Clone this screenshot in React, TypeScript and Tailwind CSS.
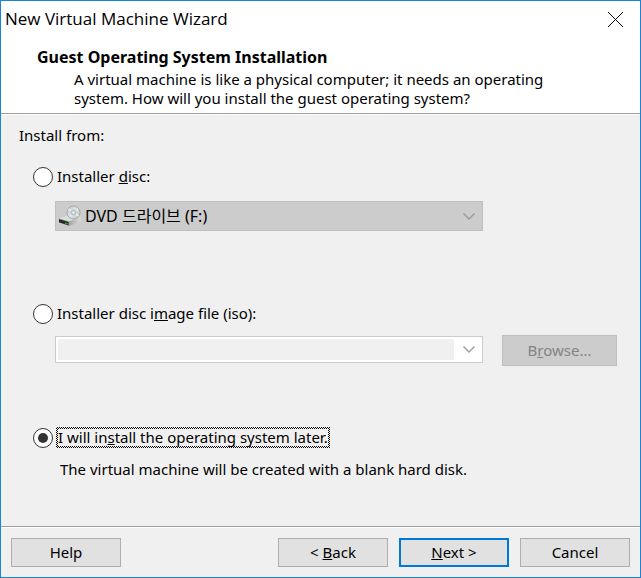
import React, { useState } from "react";

type Source = "disc" | "image" | "later";

type SourceRadioProps = {
  value: Source;
  source: Source;
  onChange: (value: Source) => void;
  children: React.ReactNode;
};

function SourceRadio({ value, source, onChange, children }: SourceRadioProps) {
  return (
    <label className="flex w-fit items-center gap-[3px] leading-[17px]">
      <input
        type="radio"
        name="source"
        className="m-0 grid size-5 shrink-0 appearance-none place-content-center rounded-full border border-[#333] bg-white before:size-[10px] before:rounded-full checked:before:bg-[#333]"
        checked={source === value}
        onChange={() => onChange(value)}
      />
      {source === value ? (
        <span className="bg-[repeating-conic-gradient(#000_0_25%,#f0f0f0_0_50%)] bg-[length:2px_2px] p-[2px]">
          <span className="block bg-[#f0f0f0]">{children}</span>
        </span>
      ) : (
        <span className="p-[2px] pl-px">{children}</span>
      )}
    </label>
  );
}

function Chevron() {
  return (
    <svg width="12" height="7" viewBox="0 0 12 7" fill="none" stroke="#999" strokeWidth="1.3">
      <path d="M0.5 0.5 L6 6 L11.5 0.5" />
    </svg>
  );
}

function DriveIcon() {
  return (
    <svg width="24" height="22" viewBox="0 0 24 22">
      <defs>
        <linearGradient id="disc" x1="0" y1="0" x2="1" y2="1">
          <stop offset="0" stopColor="#bcc3c5" />
          <stop offset="0.5" stopColor="#e2e7e8" />
          <stop offset="1" stopColor="#b4babc" />
        </linearGradient>
        <linearGradient id="drive" x1="0" y1="0" x2="1" y2="0">
          <stop offset="0" stopColor="#a2a2a2" />
          <stop offset="1" stopColor="#dcdcdc" />
        </linearGradient>
      </defs>
      <path d="M1 13.5 L11 10 L22.5 12 L12 16.5 Z" fill="#dedede" />
      <path d="M11 16.5 L22.5 12 V16.5 L11 21 Z" fill="url(#drive)" />
      <path d="M1 13.5 L11 16.5 V21 L1 17.5 Z" fill="#8f8f8f" />
      <path d="M1 14.2 L10.5 17 V20.2 L1 17.2 Z" fill="#252725" />
      <path d="M7 17.9 L9.5 18.7" stroke="#2fa52f" strokeWidth="1.6" />
      <circle cx="15.5" cy="7.5" r="6.5" fill="url(#disc)" stroke="#a3aaac" />
      <path d="M15.5 7.5 L10.5 4 M15.5 7.5 L20.5 11" stroke="#f0f3f4" strokeWidth="1.5" />
      <circle cx="15.5" cy="7.5" r="2.5" fill="#cfd5d7" stroke="#b2b9bb" />
      <circle cx="15.5" cy="7.5" r="1" fill="#eef0f0" />
    </svg>
  );
}

export default function App(): React.ReactElement {
  const [source, setSource] = useState<Source>("later");

  return (
    <main className="flex min-h-screen flex-col border border-[#1883d7] bg-[#f0f0f0] font-['Noto_Sans','Noto_Sans_CJK_KR',sans-serif] text-[15px] text-black">
      <header className="border-b border-[#a0a0a0] bg-white pb-[5px]">
        <div className="flex items-center justify-between pr-[17px] pl-1">
          <h1 className="font-['Open_Sans',sans-serif] text-[17px] leading-9">
            New Virtual Machine Wizard
          </h1>
          <button aria-label="Close">
            <svg width="15" height="15" viewBox="0 0 15 15" stroke="#000">
              <path d="M0 0 L15 15 M15 0 L0 15" />
            </svg>
          </button>
        </div>
        <div className="pt-2 pl-9">
          <h2 className="text-base leading-6 font-bold">
            Guest Operating System Installation
          </h2>
          <p className="max-w-[520px] pt-px pl-[37px] leading-[19px]">
            A virtual machine is like a physical computer; it needs an operating
            <br />
            system. How will you install the guest operating system?
          </p>
        </div>
      </header>

      <form className="grow border-t border-white pr-[23px] pl-8">
        <p className="-ml-[14px] pt-2.5 leading-5">Install from:</p>

        <div className="pt-[21px]">
          <SourceRadio value="disc" source={source} onChange={setSource}>
            Installer <u>d</u>isc:
          </SourceRadio>
          <div className="grid grid-cols-[1fr_115px] gap-[19px] pt-3.5 pl-[22px]">
            <div className="relative">
              <select
                aria-label="Installer disc"
                className="block h-[30px] w-full appearance-none border border-[#bfbfbf] bg-[#ccc] pl-[29px] text-base text-black opacity-100"
                disabled
              >
                <option>DVD 드라이브 (F:)</option>
              </select>
              <span className="pointer-events-none absolute inset-y-0 left-[3px] flex items-center">
                <DriveIcon />
              </span>
              <span className="pointer-events-none absolute inset-y-0 right-2 flex items-center">
                <Chevron />
              </span>
            </div>
          </div>
        </div>

        <div className="pt-[72px]">
          <SourceRadio value="image" source={source} onChange={setSource}>
            Installer disc i<u>m</u>age file (iso):
          </SourceRadio>
          <div className="grid grid-cols-[1fr_115px] items-center gap-[19px] pt-[11px] pl-[22px]">
            <div className="flex h-[27px] self-start border border-[#ccc] bg-white p-0.5 mt-px">
              <input
                aria-label="Installer disc image file"
                className="min-w-0 grow bg-[#f0f0f0] px-1"
                disabled
              />
              <button
                type="button"
                aria-label="Show recent image files"
                className="flex w-[26px] items-center justify-center pl-1"
                disabled
              >
                <Chevron />
              </button>
            </div>
            <button
              type="button"
              className="h-[31px] border border-[#bfbfbf] bg-[#ccc] text-[#838383]"
              disabled
            >
              B<u>r</u>owse...
            </button>
          </div>
        </div>

        <div className="pt-[61px] pb-8">
          <SourceRadio value="later" source={source} onChange={setSource}>
            I will in<u>s</u>tall the operating system later.
          </SourceRadio>
          <p className="pt-[11px] pl-[27px] leading-5">
            The virtual machine will be created with a blank hard disk.
          </p>
        </div>
      </form>

      <footer className="border-t border-[#a0a0a0]">
        <div className="flex gap-[11px] border-t border-white p-2.5">
          <button className="mr-auto h-[29px] w-[110px] border border-[#adadad] bg-[#e1e1e1]">
            Help
          </button>
          <button className="h-[29px] w-[110px] border border-[#adadad] bg-[#e1e1e1]">
            &lt; <u>B</u>ack
          </button>
          <button className="h-[29px] w-[110px] border-2 border-[#0078d7] bg-[#e1e1e1]">
            <u>N</u>ext &gt;
          </button>
          <button className="h-[29px] w-[110px] border border-[#adadad] bg-[#e1e1e1]">
            Cancel
          </button>
        </div>
      </footer>
    </main>
  );
}
